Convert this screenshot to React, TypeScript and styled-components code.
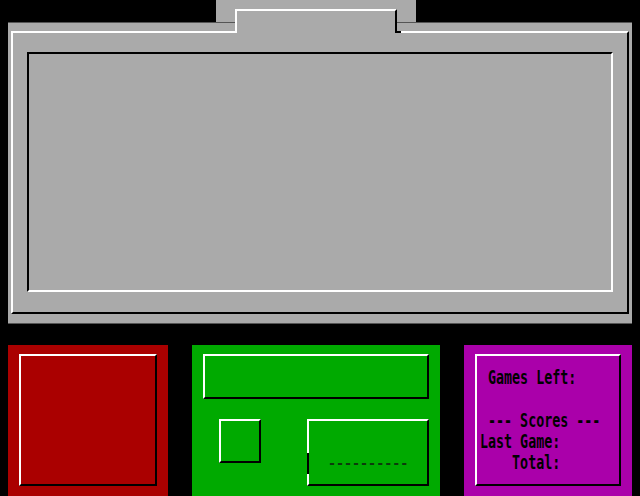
import React from 'react';
import styled, { createGlobalStyle } from 'styled-components';

const GlobalStyle = createGlobalStyle`
  html, body {
    margin: 0;
    padding: 0;
    background: #000;
  }
`;

const Screen = styled.div`
  width: 640px;
  height: 496px;
  display: flex;
  flex-direction: column;
  background: #000;
  overflow: hidden;
  font-family: 'DejaVu Sans Mono', 'Liberation Mono', monospace;
`;

const TabStrip = styled.div`
  height: 22px;
  padding-left: 216px;
  display: flex;
`;

const Tab = styled.div`
  width: 200px;
  height: 22px;
  box-sizing: border-box;
  padding: 9px 19px 0;
  background: #aaaaaa;
`;

// raised lip of the tab; it runs down over the board's top edge
const TabLip = styled.div`
  position: relative;
  z-index: 1;
  height: 24px;
  box-sizing: border-box;
  background: #aaaaaa;
  border-top: 2px solid #fff;
  border-left: 2px solid #fff;
  border-right: 2px solid #000;

  &::after {
    content: '';
    position: absolute;
    right: -6px;
    top: 20px;
    width: 4px;
    height: 2px;
    background: #000;
  }
`;

const Board = styled.div`
  margin-left: 8px;
  width: 624px;
  height: 302px;
  box-sizing: border-box;
  display: flex;
  background: #aaaaaa;
  border-top: 1px solid #555;
  border-bottom: 1px solid #555;
  padding: 8px 3px 9px;
`;

const Raised = styled.div`
  box-sizing: border-box;
  border-top: 2px solid #fff;
  border-left: 2px solid #fff;
  border-right: 2px solid #000;
  border-bottom: 2px solid #000;
`;

const Sunken = styled.div`
  flex: 1;
  box-sizing: border-box;
  border-top: 2px solid #000;
  border-left: 2px solid #000;
  border-right: 2px solid #fff;
  border-bottom: 2px solid #fff;
`;

const BoardFrame = styled(Raised)`
  flex: 1;
  display: flex;
  padding: 19px 14px 20px;
`;

const Dock = styled.div`
  margin-top: 21px;
  margin-left: 8px;
  display: flex;
  gap: 24px;
  height: 151px;
`;

const Card = styled.div<{ $bg: string; $w: number }>`
  width: ${(p) => p.$w}px;
  box-sizing: border-box;
  background: ${(p) => p.$bg};
  padding: 9px 11px 10px;
  display: flex;
  flex-direction: column;
`;

const CardFrame = styled(Raised)`
  flex: 1;
`;

const Controls = styled.div`
  flex: 1;
  display: flex;
  flex-direction: column;
  gap: 20px;
`;

const WideBox = styled(Raised)`
  height: 45px;
`;

const ControlRow = styled.div`
  display: flex;
  align-items: flex-start;
`;

const SmallBox = styled(Raised)`
  margin-left: 16px;
  width: 42px;
  height: 44px;
`;

const InputBox = styled(Raised)`
  position: relative;
  margin-left: auto;
  width: 122px;
  height: 67px;
  padding: 34px 0 0 19px;
`;

const Blanks = styled.div`
  font-size: 13.33px;
  font-weight: bold;
  line-height: 17px;
  color: #0c3a0c;
  white-space: pre;
`;

const Caret = styled.div`
  position: absolute;
  left: -2px;
  top: 32px;
  width: 2px;
  height: 21px;
  background: #000;
`;

const ScoreFrame = styled(Raised)`
  flex: 1;
  padding: 11px 0 0 3px;
`;

const ScoreText = styled.div`
  font-size: 13.33px;
  font-weight: bold;
  line-height: 15.36px;
  color: #000;
  white-space: pre;
  transform: scaleY(1.4);
  transform-origin: top left;
`;

const scoreLines = [' Games Left:', '', ' --- Scores ---', 'Last Game:', '    Total:'];

export default function App() {
  return (
    <Screen>
      <GlobalStyle />
      <TabStrip>
        <Tab>
          <TabLip />
        </Tab>
      </TabStrip>
      <Board>
        <BoardFrame>
          <Sunken />
        </BoardFrame>
      </Board>
      <Dock>
        <Card $bg="#aa0000" $w={160}>
          <CardFrame />
        </Card>
        <Card $bg="#00aa00" $w={248}>
          <Controls>
            <WideBox />
            <ControlRow>
              <SmallBox />
              <InputBox>
                <Caret />
                <Blanks>----------</Blanks>
              </InputBox>
            </ControlRow>
          </Controls>
        </Card>
        <Card $bg="#aa00aa" $w={168}>
          <ScoreFrame>
            <ScoreText>{scoreLines.join('\n')}</ScoreText>
          </ScoreFrame>
        </Card>
      </Dock>
    </Screen>
  );
}
